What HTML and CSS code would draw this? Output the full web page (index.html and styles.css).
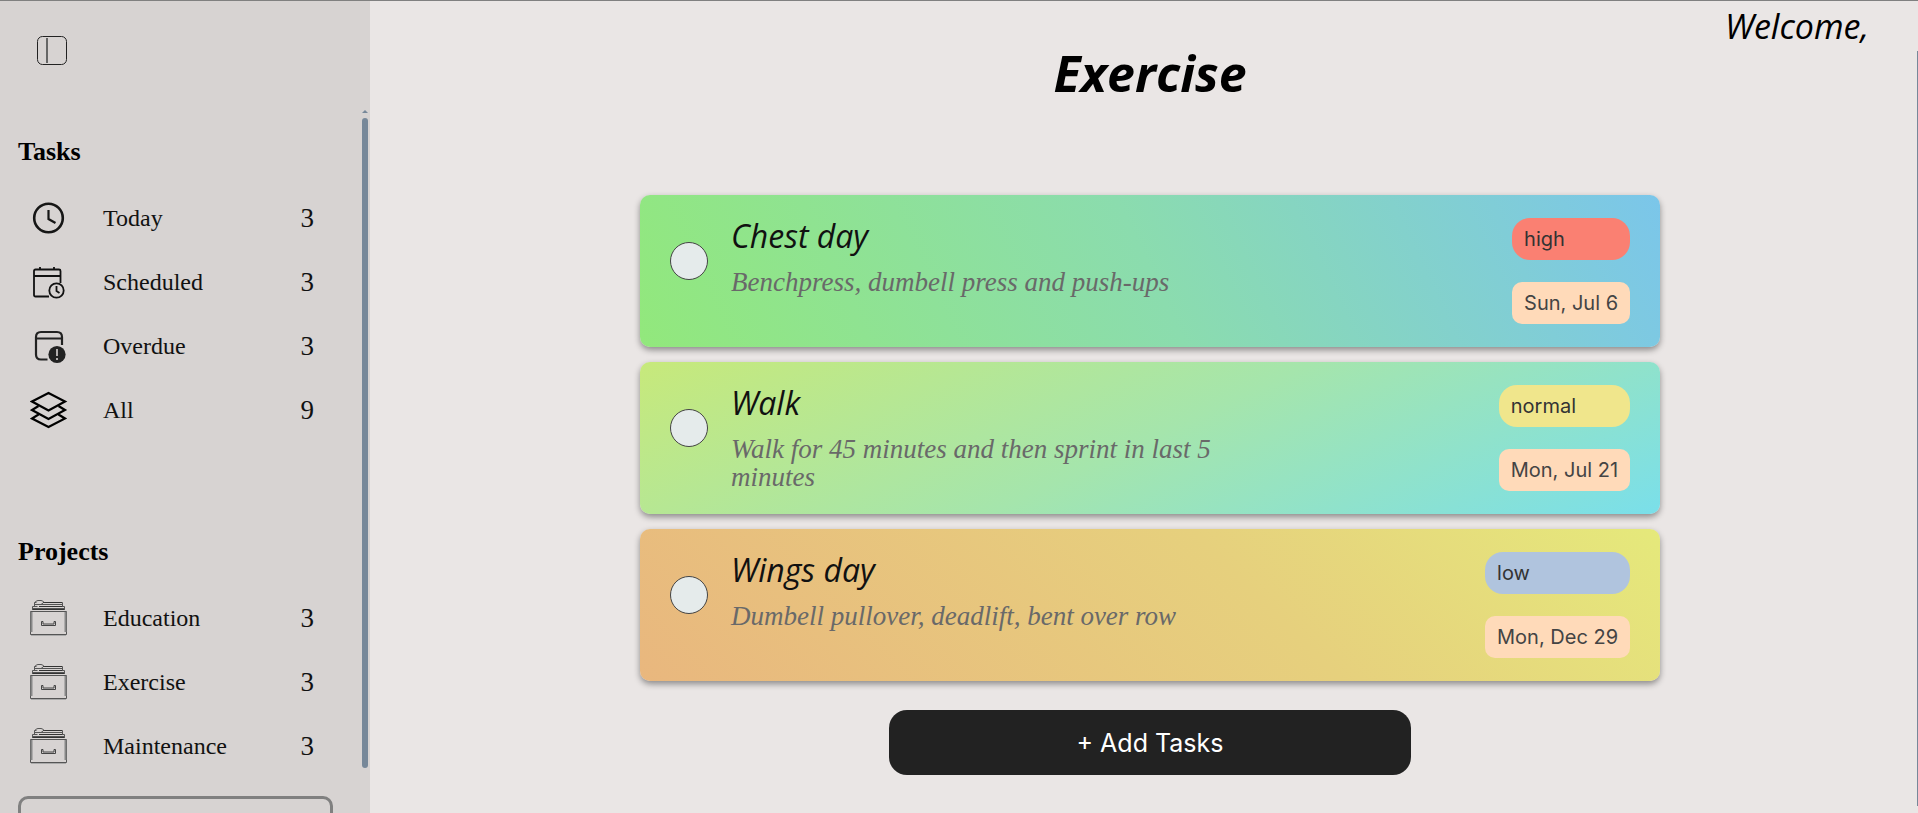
FILE: index.html
```
<!DOCTYPE html>
<html lang="en">
<head>
<meta charset="utf-8">
<title>Exercise</title>
<link rel="stylesheet" href="styles.css">
</head>
<body>
<svg class="sprite" aria-hidden="true">
  <symbol id="cabinet" viewBox="0 0 38 38">
    <g fill="none" stroke="#555" stroke-width="1">
      <path d="M0.500 12.500h36v23h-36z"/>
      <path d="M1.500 13v20M35.500 13v20" stroke="#888" stroke-width="2"/>
      <path d="M1 36.500h35" stroke="#aaa"/>
      <path d="M2.500 11V7.500h5M2.500 9.500h32M34.500 11V7.500h-4M4.500 7V3.500h2M10 5.500h23M32.500 7.500V3.500H14"/>
      <path d="M9 7.500h23M3 10.500h31M13 3.500h19" stroke="#333"/>
      <path d="M5 3.500q1-2 3-2h3q2 0 3 2M5 5.500h6l2-1.500"/>
      <path d="M13 22.500h-1.500v4h14v-4H24v2.500H13z" stroke="#444"/>
    </g>
  </symbol>
</svg>
<div class="app">
  <aside class="sidebar">
    <header class="sidebar-top">
      <button class="toggle" type="button" aria-label="Toggle sidebar">
        <svg width="32" height="32" viewBox="0 0 32 32" fill="none" stroke="#222"><rect x="1.500" y="1.500" width="29" height="28" rx="5"/><path d="M11 3v25" stroke="#666" stroke-width="2"/></svg>
      </button>
    </header>
    <div class="scroller">
      <nav class="nav">
        <section class="group">
          <h2>Tasks</h2>
          <ul>
            <li><a href="#"><svg class="icon" viewBox="0 0 38 38" fill="none" stroke="#161616" stroke-width="2.600"><circle cx="18.500" cy="19" r="14.300"/><path d="M18.500 11v9l7 4" stroke-width="2.200"/></svg><span>Today</span><span class="count">3</span></a></li>
            <li><a href="#"><svg class="icon" viewBox="0 0 38 38" fill="none" stroke="#111" stroke-width="1.800"><path d="M19 33.500H5.500Q4 33.500 4 32V8q0-1.500 1.500-1.500h23.500q1.500 0 1.500 1.500v12M4 13h26.500M10 6.500V4M24 6.500V4"/><circle cx="26.500" cy="27.500" r="7.200"/><path d="M26.500 23v5l3 2"/></svg><span>Scheduled</span><span class="count">3</span></a></li>
            <li><a href="#"><svg class="icon" viewBox="0 0 38 38" fill="none" stroke="#222" stroke-width="2.200"><path d="M17.500 32.500H11q-5 0-5-5V10q0-5 5-5h16q5 0 5 5v8M6 11.500h26"/><circle cx="27" cy="27.500" r="8.600" fill="#222" stroke="none"/><path d="M27 22v7M27 31v2" stroke="#d7d3d2" stroke-width="1.600"/></svg><span>Overdue</span><span class="count">3</span></a></li>
            <li><a href="#"><svg class="icon" viewBox="0 0 38 38" fill="none" stroke="#000" stroke-width="2.200"><path d="M18.500 2 35 10.500 18.500 19.500 2 10.500z"/><path d="M8.500 15 2 19l16.500 9L35 19l-6.500-4M8.500 23.500 2 27.500l16.500 8.500L35 27.500l-6.500-4"/></svg><span>All</span><span class="count">9</span></a></li>
          </ul>
        </section>
        <section class="group">
          <h2>Projects</h2>
          <ul>
            <li><a href="#"><svg class="icon"><use href="#cabinet"/></svg><span>Education</span><span class="count">3</span></a></li>
            <li><a href="#"><svg class="icon"><use href="#cabinet"/></svg><span>Exercise</span><span class="count">3</span></a></li>
            <li><a href="#"><svg class="icon"><use href="#cabinet"/></svg><span>Maintenance</span><span class="count">3</span></a></li>
          </ul>
        </section>
      </nav>
      <div class="track" aria-hidden="true"><i class="arrow"></i><i class="thumb"></i></div>
    </div>
    <button class="new-project" type="button" aria-label="New project"></button>
  </aside>
  <main class="main">
    <p class="welcome">Welcome,</p>
    <h1>Exercise</h1>
    <ul class="tasks">
      <li class="card green">
        <input class="tick" type="checkbox" id="t1">
        <div class="text"><label for="t1">Chest day</label><p>Benchpress, dumbell press and push-ups</p></div>
        <div class="tags"><span class="tag high">high</span><span class="tag date">Sun, Jul 6</span></div>
      </li>
      <li class="card lime">
        <input class="tick" type="checkbox" id="t2">
        <div class="text"><label for="t2">Walk</label><p>Walk for 45 minutes and then sprint in last 5 minutes</p></div>
        <div class="tags"><span class="tag normal">normal</span><span class="tag date">Mon, Jul 21</span></div>
      </li>
      <li class="card sand">
        <input class="tick" type="checkbox" id="t3">
        <div class="text"><label for="t3">Wings day</label><p>Dumbell pullover, deadlift, bent over row</p></div>
        <div class="tags"><span class="tag low">low</span><span class="tag date">Mon, Dec 29</span></div>
      </li>
    </ul>
    <button class="add" type="button">+ Add Tasks</button>
  </main>
  <div class="page-track" aria-hidden="true"></div>
</div>
</body>
</html>
```
FILE: styles.css
```
* { box-sizing: border-box; }
body { margin: 0; background: #eae6e5; color: #000; font-family: "Liberation Serif", serif; }
ul { list-style: none; margin: 0; padding: 0; }
h1, h2, p { margin: 0; }
button { font: inherit; cursor: pointer; }
.sprite { display: none; }

.app { display: flex; height: 100vh; overflow: hidden; border-top: 1px solid #808080; }

.sidebar { flex: 0 0 370px; background: #d7d3d2; display: flex; flex-direction: column; }
.sidebar-top { flex: none; height: 106px; padding: 34px 36px; }
.toggle { display: block; padding: 0; border: 0; background: none; }
.toggle svg { display: block; }
.scroller { flex: none; display: flex; padding-right: 2px; }
.nav { flex: 1; padding: 25px 0 0 18px; }
.group { margin-bottom: 90px; }
.group:last-child { margin-bottom: 18px; }
h2 { font-size: 26px; line-height: 40px; margin-bottom: 14px; }
.nav a { display: flex; align-items: center; height: 64px; padding: 0 36px 0 12px; color: #111; font-size: 24px; text-decoration: none; }
.icon { flex: none; width: 38px; height: 38px; margin-right: 35px; }
.count { margin-left: auto; margin-right: 12px; font-size: 27px; }
.track { flex: 0 0 6px; display: flex; flex-direction: column; padding-top: 3px; margin-bottom: 28px; }
.arrow { border: 3px solid transparent; border-top: 0; border-bottom-color: #778899; margin-bottom: 5px; }
.thumb { flex: 1; border-radius: 3px; background: #778899; }
.new-project { flex: none; height: 64px; margin: 0 37px 0 18px; border: 3px solid #808080; border-radius: 10px; background: none; }

.main { flex: 1; display: flex; flex-direction: column; align-items: center; padding-left: 13px; }
.welcome, h1, .text { font-family: "Open Sans", sans-serif; font-style: italic; }
.welcome { align-self: flex-end; margin-right: 48px; padding-top: 6px; font-size: 34px; line-height: 38px; }
h1 { font-size: 50px; line-height: 56px; margin-bottom: 94px; }
.tasks { width: 66.5%; display: flex; flex-direction: column; gap: 15px; }
.card { display: flex; align-items: flex-start; min-height: 152px; padding: 23px 30px 22px; border-radius: 10px; box-shadow: 0 3px 6px rgba(0, 0, 0, 0.4); }
.green { background: linear-gradient(65deg, #92e87c, #8bdcae 50%, #7bc6ea); }
.lime { background: linear-gradient(155deg, #c7e97b, #a5e5ac 50%, #7adfea); }
.sand { background: linear-gradient(45deg, #e9b77e, #e6d07d 60%, #e5e97b); }
.tick { appearance: none; flex: none; width: 38px; height: 38px; margin: 24px 23px 0 0; border: 1px solid #444; border-radius: 50%; background: #e5ebeb; }
.text { flex: 1; }
.text label { display: block; color: #111; font-size: 32px; line-height: 36px; margin-bottom: 14px; }
.text p { max-width: 500px; color: #696969; font-family: "Liberation Serif", serif; font-size: 27px; line-height: 28px; }
.tags { display: flex; flex-direction: column; gap: 22px; }
.tag { padding: 0 12px; border-radius: 10px; color: #333; font-family: Inter, sans-serif; font-size: 20px; line-height: 42px; }
.date { background: #ffdab9; color: #444; }
.high { background: #fa8072; border-radius: 18px; }
.normal { background: #f0e68c; border-radius: 18px; }
.low { background: #b0c4de; border-radius: 18px; }
.add { flex: none; width: 34%; height: 65px; margin-top: 29px; border: 0; border-radius: 18px; background: #222; color: #fff; font-family: Inter, sans-serif; font-size: 25px; }
.page-track { flex: 0 0 1px; margin: 50px 0 7px; background: #778899; }
```
